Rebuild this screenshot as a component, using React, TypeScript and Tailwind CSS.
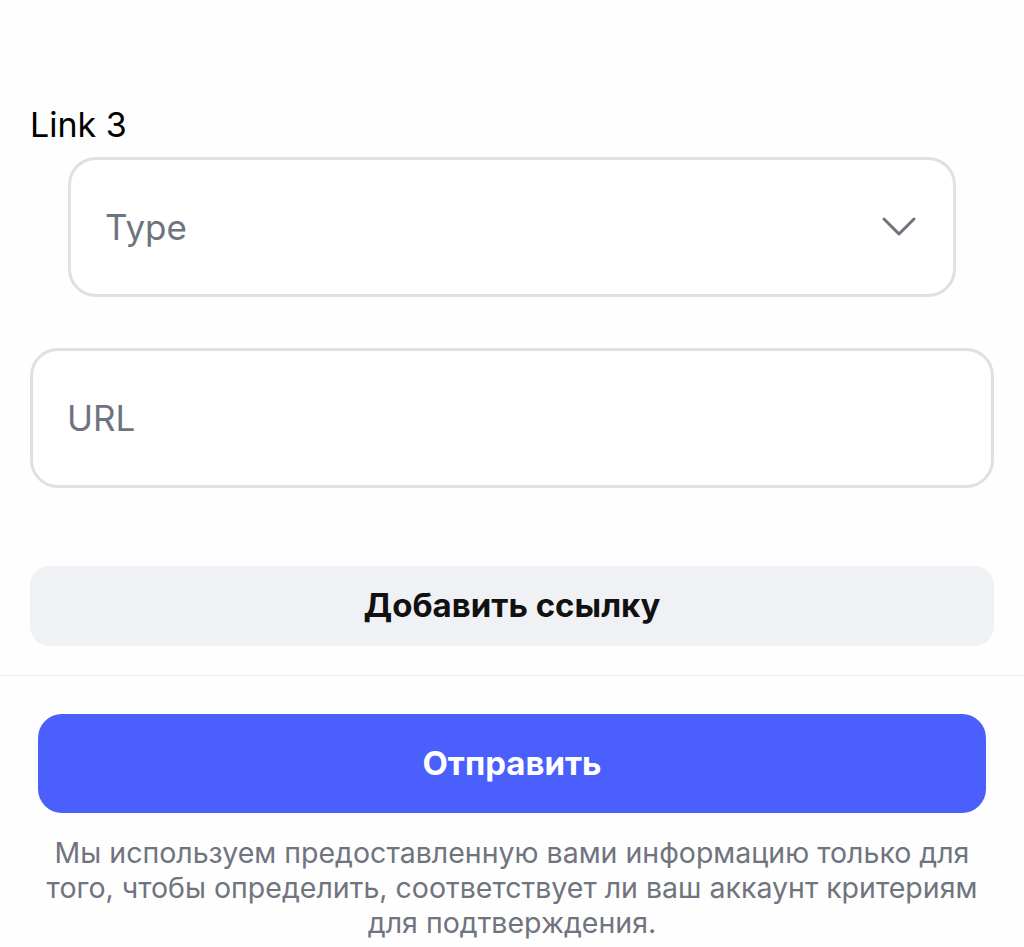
const fieldClassName =
  "flex h-[140px] items-center rounded-[28px] border-[3px] border-[#dfdfe5] bg-white px-[34px] text-[35px] text-[#6e7380]";

function Chevron() {
  return (
    <svg width="36" height="24" viewBox="0 0 36 24" fill="none" className="text-[#6e7380]">
      <path d="M3 4 L18 19 L33 4" stroke="currentColor" strokeWidth="3" strokeLinecap="round" strokeLinejoin="round" />
    </svg>
  );
}

export default function App() {
  return (
    <div className="min-h-[947px] bg-[#fefefe] font-['Inter',sans-serif] antialiased">
      <div className="pt-[105px]">
        <div className="px-[30px] text-[34px] leading-[40px] text-black">Link 3</div>

        <div className="mt-[12px] pl-[68px] pr-[68px]">
          <button type="button" className={`${fieldClassName} w-full justify-between pr-[36px] text-left`}>
            <span>Type</span>
            <Chevron />
          </button>
        </div>

        <div className="mt-[51px] px-[30px]">
          <div className={fieldClassName}>URL</div>
        </div>

        <div className="mt-[78px] px-[30px]">
          <button
            type="button"
            className="flex h-[80px] w-full items-center justify-center rounded-[20px] bg-[#f0f1f5] text-[33px] font-bold text-[#111111]"
          >
            Добавить ссылку
          </button>
        </div>

        <div className="mt-[29px] h-px bg-[#f0f0f2]" />

        <div className="px-[38px] pt-[38px]">
          <button
            type="button"
            className="flex h-[99px] w-full items-center justify-center rounded-[24px] bg-[#4a5ffb] text-[33px] font-bold text-white"
          >
            Отправить
          </button>
          <p className="mt-[22px] whitespace-nowrap text-center text-[28.5px] leading-[35px] text-[#70747f]">
            Мы используем предоставленную вами информацию только для
            <br />
            того, чтобы определить, соответствует ли ваш аккаунт критериям
            <br />
            для подтверждения.
          </p>
        </div>
      </div>
    </div>
  );
}
